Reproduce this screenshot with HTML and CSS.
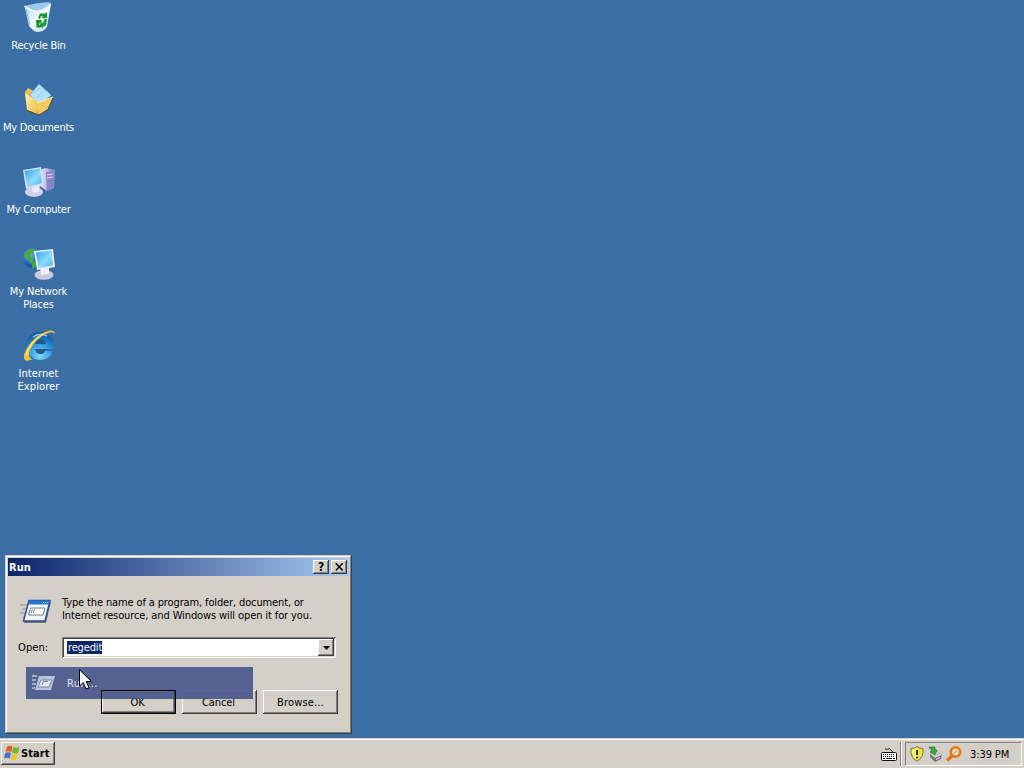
FILE: index.html
```html
<!DOCTYPE html>
<html lang="en">
<head>
<meta charset="utf-8">
<title>Desktop</title>
<link rel="stylesheet" href="styles.css">
</head>
<body>
<svg class="defs" width="0" height="0" aria-hidden="true">
  <defs>
    <linearGradient id="screen" x1="0" y1="0" x2="1" y2="1"><stop offset="0" stop-color="#2d9df0"/><stop offset=".55" stop-color="#8ddcff"/><stop offset="1" stop-color="#4db2f2"/></linearGradient>
    <linearGradient id="bin" x1="0" y1="0" x2="1" y2="1"><stop offset="0" stop-color="#a9d8f5"/><stop offset=".5" stop-color="#f3fbff"/><stop offset="1" stop-color="#b4cfe6"/></linearGradient>
    <linearGradient id="folder" x1="0" y1="0" x2="1" y2="1"><stop offset="0" stop-color="#fff3a8"/><stop offset="1" stop-color="#e9b842"/></linearGradient>
    <linearGradient id="case" x1="0" y1="0" x2="1" y2="0"><stop offset="0" stop-color="#e6e4fa"/><stop offset="1" stop-color="#8886c8"/></linearGradient>
    <radialGradient id="globe" cx=".35" cy=".3" r=".8"><stop offset="0" stop-color="#6fb4f4"/><stop offset=".6" stop-color="#2460c0"/><stop offset="1" stop-color="#123a86"/></radialGradient>
    <radialGradient id="ie" cx=".5" cy=".85" r=".9"><stop offset="0" stop-color="#7fdcff"/><stop offset=".5" stop-color="#2a92dc"/><stop offset="1" stop-color="#0d4590"/></radialGradient>
  </defs>
</svg>
<main class="desktop">
  <div class="icons">
    <div class="icon">
      <svg viewBox="0 0 32 32"><path d="M1.500 4 14 9 28 2 24 25Q19 32 11 29L6 24Z" fill="url(#bin)"/><path d="M1.500 4 Q12 1 26 0L28 2Q20 9 14 9 7 8 1.500 4" fill="#9bcbeb"/><path d="M1.500 4Q12 12 20 8L28 2" fill="none" stroke="#fff" stroke-width="1.400"/><path d="M3 7 7 23" stroke="#7eb4dc"/><path d="M15 16 17 11.500H22L24 10V16H18.500L20 14H18L17 17ZM24 17 23 23 20 25V26.500L16.500 23 20 20V22L21.500 17ZM13 18H18.500V22L16.500 21 16 23H18V25.500H13.500Z" fill="#169a24"/></svg>
      <span>Recycle Bin</span>
    </div>
    <div class="icon">
      <svg viewBox="0 0 32 32"><path d="M2 8 5 4 11 7 17 12 20 26 6 27Z" fill="#e8bd50"/><path d="M16 0 28 11 17 23 7 11Z" fill="#b3e2fb" stroke="#6aa8d8" stroke-width=".7"/><path d="M11 9 17 4M14 13 21 7" stroke="#8cc9ef"/><path d="M2 9 14 17 16 31 4 26Z" fill="url(#folder)"/><path d="M30 13 14 19 16 31 25 25Z" fill="#f2cc60"/><path d="M14 19 30 13" stroke="#fff2a5"/><path d="M4 26.500 16 31 25 25.500 30 14" fill="none" stroke="#5c4718"/></svg>
      <span>My Documents</span>
    </div>
    <div class="icon">
      <svg viewBox="0 0 32 32"><path d="M17 4 22 2 32 4 31 22 24 25 17 20Z" fill="url(#case)"/><path d="M23 6 31 5 30 22 24 25Z" fill="#8885c7"/><path d="M24 9 30 8M24 12 30 11" stroke="#dddaf8"/><ellipse cx="11" cy="26" rx="9" ry="5" fill="#cfd0ea"/><path d="M8 19 17 18 16 26 10 27Z" fill="#eceaf8"/><path d="M0 4 18 1 20 18 3 23Z" fill="#d5e0f2"/><path d="M1.500 5 17 2.500 19 17 4.500 21Z" fill="url(#screen)"/></svg>
      <span>My Computer</span>
    </div>
    <div class="icon wide">
      <svg viewBox="0 0 32 32"><circle cx="10" cy="10" r="10" fill="url(#globe)"/><path d="M3 4Q6 0 12 1L10 5 7 6 8 9 11 12 8 16 5 12 1 9Z" fill="#43ad3a"/><path d="M9 14 13 14 13 19 9 20Z" fill="#43ad3a"/><ellipse cx="21" cy="27" rx="9.500" ry="4.800" fill="#cdc6e0"/><path d="M17 20 26 19 26 26 18 27Z" fill="#eeedf8"/><path d="M11 3 30 1 32 19 14 22Z" fill="#e8f0fb"/><path d="M13 4.500 28.500 2.500 30 17.500 15.500 20Z" fill="url(#screen)"/></svg>
      <span>My Network<br>Places</span>
    </div>
    <div class="icon wider">
      <svg viewBox="0 0 32 32"><path fill-rule="evenodd" d="M17 2A14 14 0 0 1 31 17V19H12Q13 24 18 24Q21 24 22 21H30Q27 30 17 30A14 14 0 0 1 17 2M12 14H23Q22 9 17.500 9T12 14" fill="url(#ie)"/><path d="M12 14H23Q22 9 17.500 9T12 14M12 19Q13 24 18 24Q21 24 22 21L25 19Z" fill="#123f7e" opacity=".5"/><path d="M10 7Q17 2 24 6" fill="none" stroke="#82cff6" stroke-width="1.500"/><path d="M32 4Q31-3 18 4Q5 12 1 25Q0 34 10 29Q4 29 7 20Q13 8 24 3.500Q30 1 32 4" fill="#f1c63c"/><path d="M3 25Q6 13 20 4" fill="none" stroke="#fff0a0"/></svg>
      <span>Internet<br>Explorer</span>
    </div>
  </div>

  <section class="window">
    <header class="titlebar">
      <b class="title">Run</b>
      <button class="cap">?</button>
      <button class="cap"><svg width="9" height="8" viewBox="0 0 9 8"><path d="M.8.3 7.700 7.500M7.700.3.8 7.500" stroke="#000" stroke-width="1.500"/></svg></button>
    </header>
    <div class="message">
      <svg width="32" height="32" viewBox="0 0 32 32"><path d="M1 10H9M3 14H8M1 18H7M4 22H6" stroke="#8c929d"/><path d="M10 7 32 7 27 28 5 28Z" fill="#77777f"/><path d="M10 5.500H31L26 26H4.500Z" fill="#f2f6fc" stroke="#284b91" stroke-width="1.500"/><path d="M10 5.500H31L30 9.500H9Z" fill="#2878d6"/><path d="M24 7.500H29" stroke="#bfe0ff" stroke-dasharray="1 1"/><path d="M11.500 13H26L24 20H9.500Z" fill="#fff" stroke="#727987"/><path d="M12 18 13.500 14.500M14 18 15.500 14.500" stroke="#7b828c"/></svg>
      <p><span class="l1">Type the name of a program, folder, document, or</span><br><span class="l2">Internet resource, and Windows will open it for you.</span></p>
    </div>
    <div class="field">
      <label>Open:</label>
      <div class="combo"><span class="selected">regedit</span><i class="drop"><svg width="7" height="4" viewBox="0 0 7 4"><path d="M0 0H7L3.500 4Z"/></svg></i></div>
    </div>
    <div class="buttons">
      <button class="btn default">OK</button>
      <button class="btn">Cancel</button>
      <button class="btn browse">Browse...</button>
    </div>
    <div class="fading-item">
      <svg width="26" height="20" viewBox="0 0 26 20"><path d="M1 3H6M1 7H5M1 11H5M1 15H4" stroke="#bcc5de" stroke-width="1.500"/><path d="M8 3H24L20 17H4Z" fill="#b8c4dc"/><path d="M10 7H21L18 14H7Z" fill="#e3e8e8" stroke="#7989ac"/><path d="M11 12 12.500 8.500H17" fill="none" stroke="#71819f"/></svg>
      <span>Run...</span>
    </div>
  </section>
  <svg class="cursor" width="13" height="21" viewBox="0 0 13 21"><path d="M.5.8V17L4.300 13.500 7 20 10 18.800 7.200 12.500H12.300Z" fill="#fff" stroke="#000"/></svg>
</main>

<footer class="taskbar">
  <button class="start"><svg width="16" height="16" viewBox="0 0 16 16"><path d="M3 1.500Q5.500 0 8.500 1.500L7.300 7Q4 5.500 1.500 7Z" fill="#e65a25"/><path d="M9.300 2Q12 3.500 15.500 2L14 8Q11 9 8 7.500Z" fill="#70b52e"/><path d="M1.200 8Q4 6.700 7 8L5.700 13.500Q3 12 0 13.200Z" fill="#3d73d7"/><path d="M7.700 8.500Q10 10 13.700 9L12.300 14.800Q9 15.600 6.500 14.200Z" fill="#f4c72a"/></svg><b>Start</b></button>
  <svg class="keyboard" width="17" height="15" viewBox="0 0 17 15"><path d="M4 1.500Q5 3 7 2T10 3 12 5" fill="none" stroke="#222"/><rect x=".5" y="5.500" width="15" height="8" rx="1" fill="#fff" stroke="#111"/><path d="M2 7.500H14M2 9.500H14" stroke="#111" stroke-dasharray="1 1"/><path d="M2 11.500H4M5 11.500H11M12 11.500H14" stroke="#111"/></svg>
  <i class="grip"></i>
  <div class="tray">
    <svg width="16" height="16" viewBox="0 0 16 16"><path d="M8 .7Q10.500 2.500 14 2.500 15 11.500 8 15.300 1 11.500 2 2.500 5.500 2.500 8 .7Z" fill="#f8e62c" stroke="#77754d"/><path d="M8 2Q5 4 3 4 3 10 8 14Z" fill="#fff78c"/><path d="M8 4V9M8 10.500V12.500" stroke="#222" stroke-width="1.800"/></svg>
    <svg width="16" height="16" viewBox="0 0 16 16"><path d="M3 8 10 5 15 9 14 13 8 16 3 11Z" fill="#73777a"/><path d="M3 8 10 5 15 9 8 12Z" fill="#c9cccb"/><path d="M9 13.500 13 11.500" stroke="#eee"/><path d="M2 1 8 1 8 4 10 4 8 9 3 6 5 5Z" fill="#35ad38" stroke="#17731f" stroke-width=".6"/></svg>
    <svg width="17" height="16" viewBox="0 0 17 16"><circle cx="10.500" cy="6" r="4.700" fill="#f6dcc0" stroke="#e8751a" stroke-width="2.600"/><path d="M7.500 9.500 2 14.500" stroke="#e8751a" stroke-width="3.200"/><path d="M9 7.500 12 4.500" stroke="#f0a060" stroke-width="1.200"/></svg>
    <time>3:39 PM</time>
  </div>
</footer>
</body>
</html>
```
FILE: styles.css
```css
* { box-sizing: border-box; }
body {
  margin: 0; width: 1024px; height: 768px; overflow: hidden;
  display: flex; flex-direction: column;
  background: #3b6ea5; color: #000;
  font: 11px/13px "DejaVu Sans Condensed", "DejaVu Sans", sans-serif;
  letter-spacing: -.3px;
}
svg { display: block; flex: none; }
button { font: inherit; letter-spacing: inherit; color: inherit; padding: 0; }
.defs { position: absolute; }
.desktop { position: relative; flex: 1; }
.icons { display: flex; flex-direction: column; width: 77px; padding-top: 2px; }
.icon { height: 82px; display: flex; flex-direction: column; align-items: center; gap: 5px; color: #fff; text-align: center; white-space: nowrap; letter-spacing: -.25px; }
.icon svg { width: 32px; height: 32px; }
.icon.wide { letter-spacing: -.15px; }
.icon.wider { letter-spacing: .1px; }

.window {
  position: absolute; left: 5px; top: 555px; width: 347px; height: 179px;
  padding: 3px; background: #d4d0c8;
  box-shadow: inset -1px -1px #404040, inset 1px 1px #d4d0c8, inset -2px -2px #808080, inset 2px 2px #fff;
}
.titlebar { display: flex; align-items: center; height: 18px; padding: 0 2px 0 1px; color: #fff; background: linear-gradient(90deg, #0a246a, #a6caf0); }
.title { flex: 1; letter-spacing: .1px; }
.cap { width: 16px; height: 14px; display: grid; place-items: center; border: 0; background: #d4d0c8; color: #000; font-weight: bold; font-size: 12px; line-height: 12px; box-shadow: inset -1px -1px #404040, inset 1px 1px #fff, inset -2px -2px #808080; }
.cap + .cap { margin-left: 2px; }
.message { display: flex; gap: 11px; padding: 19px 0 0 11px; height: 61px; white-space: nowrap; }
.message p { margin: 1px 0 0; }
.l1 { letter-spacing: -.13px; }
.l2 { letter-spacing: -.11px; }
.field { display: flex; align-items: center; padding: 0 13px 0 10px; height: 21px; }
.field label { width: 44px; letter-spacing: .1px; }
.combo { flex: 1; display: flex; align-items: center; height: 21px; padding: 2px 2px 2px 5px; background: #fff; box-shadow: inset 1px 1px #808080, inset -1px -1px #fff, inset 2px 2px #404040, inset -2px -2px #d4d0c8; }
.selected { background: #0a246a; color: #fff; padding: 0 0 0 1px; letter-spacing: -.15px; }
.drop { margin-left: auto; width: 16px; height: 17px; display: grid; place-items: center; background: #d4d0c8; box-shadow: inset -1px -1px #404040, inset 1px 1px #fff, inset -2px -2px #808080; }
.buttons { display: flex; gap: 6px; padding: 32px 0 0 93px; }
.btn { width: 75px; height: 24px; padding-right: 2px; border: 0; background: #d4d0c8; letter-spacing: -.1px; box-shadow: inset -1px -1px #404040, inset 1px 1px #fff, inset -2px -2px #808080; }
.browse { padding: 0; letter-spacing: .15px; }
.default { position: relative; box-shadow: inset -2px -2px #404040, inset 2px 2px #fff, inset -3px -3px #808080; }
.default::after { content: ""; position: absolute; inset: 0; z-index: 2; border: 1px solid #000; box-shadow: inset -1px -1px #404040; }
.fading-item { position: absolute; left: 21px; top: 112px; width: 227px; height: 32px; display: flex; align-items: center; gap: 10px; padding-left: 5px; color: #e4e7ef; letter-spacing: .4px; background: rgba(64, 82, 138, .87); z-index: 1; }
.cursor { position: absolute; left: 79px; top: 669px; z-index: 3; }

.taskbar { display: flex; align-items: center; height: 30px; padding: 2px 2px 0 1px; background: #d4d0c8; box-shadow: inset 0 1px #d4d0c8, inset 0 2px #fff; }
.start { display: flex; align-items: center; gap: 1px; width: 54px; height: 23px; margin-top: -2px; padding-left: 3px; border: 0; background: #d4d0c8; letter-spacing: .1px; box-shadow: inset -1px -1px #404040, inset 1px 1px #fff, inset -2px -2px #808080; }
.keyboard { margin-left: auto; }
.grip { width: 2px; height: 24px; margin: 0 3px 0 2px; border-left: 1px solid #808080; border-right: 1px solid #fff; }
.tray { display: flex; align-items: center; gap: 2px; width: 117px; height: 24px; padding-left: 3px; border: 1px solid; border-color: #808080 #fff #fff #808080; white-space: nowrap; }
.tray time { margin-left: 6px; letter-spacing: -.1px; }
```
